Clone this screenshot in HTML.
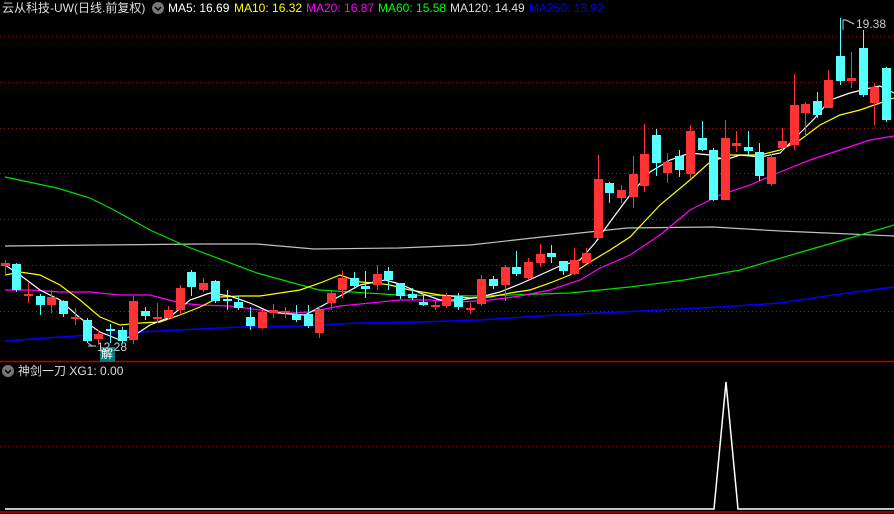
<!DOCTYPE html>
<html><head><meta charset="utf-8"><style>
body{margin:0;background:#000;width:894px;height:514px;overflow:hidden;font-family:"Liberation Sans","Noto Sans CJK SC",sans-serif}
svg{position:absolute;left:0;top:0}
.t{position:absolute;font-size:12px;white-space:nowrap;line-height:14px}
</style></head><body>
<svg width="894" height="514" viewBox="0 0 894 514">
<g stroke="#8b1a1a" stroke-dasharray="1,3" stroke-width="1">
<line x1="0" y1="36.5" x2="894" y2="36.5"/><line x1="0" y1="82.5" x2="894" y2="82.5"/><line x1="0" y1="128.5" x2="894" y2="128.5"/><line x1="0" y1="173.5" x2="894" y2="173.5"/><line x1="0" y1="219.5" x2="894" y2="219.5"/><line x1="0" y1="265.5" x2="894" y2="265.5"/><line x1="0" y1="311.5" x2="894" y2="311.5"/><line x1="0" y1="446.5" x2="894" y2="446.5"/>
</g>
<g fill="none" stroke-width="1.2">
<polyline stroke="#c0c0c0" points="5,246 100,245 200,244 257,244 314,249 399,248 470,245 542,237 627,228 713,227 780,231 827,233 894,236"/>
<polyline stroke="#0000ff" stroke-width="1.6" points="5,341 60,337 120,333 180,330 240,327 300,326 360,323 420,322 480,320 540,316 600,313 660,310 720,307 780,303 840,294 894,287"/>
<polyline stroke="#00e000" points="5,177 57,188 90,198 114,210 150,230 188,247 257,273 319,290 399,295 480,296 570,293 630,287 684,280 740,270 798,253 850,238 894,225"/>
<polyline stroke="#ff00ff" points="5,290 30,290 60,292 90,292 120,295 150,295 180,303 200,305 230,306 260,310 290,313 310,312 340,306 370,303 400,300 430,300 460,302 490,300 520,296 550,290 580,280 600,268 630,255 660,235 690,210 720,195 750,185 780,172 810,160 840,150 870,140 894,136"/>
<polyline stroke="#ffff00" points="5,275 20,272 40,275 60,285 80,300 100,317 120,325 140,323 160,322 180,315 200,307 220,297 240,296 260,296 280,293 300,290 320,283 340,275 360,282 375,283 390,285 410,290 440,295 470,298 490,297 510,293 530,290 550,283 570,275 590,262 610,250 630,237 660,205 690,180 710,162 730,155 760,155 780,150 800,140 820,125 840,115 860,110 880,103 894,98"/>
<polyline stroke="#ffffff" points="5,265 20,275 40,290 60,300 80,318 100,332 120,340 135,335 150,325 170,317 190,300 210,293 230,296 250,303 270,312 290,314 305,315 320,307 340,296 360,285 385,280 400,284 420,293 440,300 460,300 480,297 500,292 520,284 540,275 560,266 580,260 595,243 610,222 630,195 650,172 670,160 690,153 710,155 725,160 740,155 760,157 780,153 800,133 815,118 830,100 850,93 870,88 880,86 894,93"/>
</g>
<g id="c"></g>
<line x1="0" y1="361.5" x2="894" y2="361.5" stroke="#c00000" stroke-width="1.5"/>
<polyline fill="none" stroke="#fff" stroke-width="1.5" points="5,509 714,509 726,382 738,509 894,509"/>
<line x1="0" y1="512" x2="894" y2="512" stroke="#c00000" stroke-width="1.5"/>
<circle cx="158" cy="8" r="6" fill="#777"/><path d="M155 7 l3 3 l3 -3" stroke="#000" fill="none" stroke-width="1.5"/>
<circle cx="8" cy="371" r="6" fill="#777"/><path d="M5 370 l3 3 l3 -3" stroke="#000" fill="none" stroke-width="1.5"/>
<path d="M843 30 V20 h3 M846 20 l8 4" stroke="#ccc" fill="none"/>
<path d="M92 346 l-4 -3 M88 346 h8" stroke="#ccc" fill="none"/>
<rect x="100" y="347" width="15" height="15" fill="#007a7a"/>
</svg>
<div class="t" style="left:2px;top:1px;color:#ddd">云从科技-UW(日线.前复权)</div>
<div class="t" style="left:168px;top:1px;color:#fff">MA5: 16.69</div>
<div class="t" style="left:234px;top:1px;color:#ff0">MA10: 16.32</div>
<div class="t" style="left:306px;top:1px;color:#f0f">MA20: 16.87</div>
<div class="t" style="left:378px;top:1px;color:#0f0">MA60: 15.58</div>
<div class="t" style="left:450px;top:1px;color:#ddd">MA120: 14.49</div>
<div class="t" style="left:529px;top:1px;color:#00f">MA250: 13.92</div>
<div class="t" style="left:18px;top:364px;color:#ddd">神剑一刀 XG1: 0.00</div>
<div class="t" style="left:856px;top:17px;color:#ccc">19.38</div>
<div class="t" style="left:97px;top:340px;color:#ccc">12.28</div>
<div class="t" style="left:101px;top:347px;color:#fff;font-size:12px">解</div>
<script>
var d=[[5,263,266,260,275,1],[16,264,290,263,292,0],[28,294,296,283,303,1],[40,296,305,294,315,0],[51,297,305,290,313,1],[63,301,314,300,317,0],[75,317,319,308,325,1],[87,320,341,318,343,0],[98,334,339,330,344,1],[110,329,331,324,343,0],[122,330,341,327,343,0],[133,301,340,296,344,1],[145,311,316,307,320,0],[157,317,319,303,323,1],[168,310,318,306,320,1],[180,288,310,285,315,1],[191,272,287,270,296,0],[203,283,290,278,292,1],[215,281,301,280,303,0],[227,299,301,290,310,0],[238,302,308,296,310,0],[250,317,326,307,330,0],[262,312,328,310,329,1],[273,310,313,304,318,1],[285,311,313,307,318,1],[296,314,320,305,322,0],[308,314,326,305,328,0],[319,309,333,307,338,1],[331,293,303,290,310,1],[342,278,290,271,298,1],[354,278,286,272,288,0],[365,286,289,271,298,0],[377,274,285,265,290,1],[388,271,280,267,290,0],[400,283,296,283,299,0],[412,294,298,288,300,0],[423,302,305,294,306,0],[435,305,307,301,310,1],[446,296,306,293,308,1],[458,296,307,293,310,0],[470,308,310,303,314,1],[481,279,304,275,306,1],[493,279,286,276,289,0],[505,267,285,265,301,1],[516,267,274,251,276,0],[528,262,278,258,280,1],[540,254,263,244,267,1],[551,253,257,245,263,0],[563,261,271,262,275,0],[574,260,274,248,275,1],[586,253,263,248,264,1],[598,179,238,155,240,1],[609,183,193,182,203,0],[621,190,198,185,203,1],[633,174,197,156,208,1],[644,154,186,124,192,1],[656,135,163,129,176,0],[667,162,173,153,183,1],[679,156,170,150,177,0],[690,131,174,125,178,1],[702,138,150,121,151,0],[713,150,200,148,201,0],[725,138,200,120,200,1],[736,143,146,131,152,1],[748,147,151,131,155,0],[759,152,176,143,181,0],[771,157,184,154,186,1],[782,141,148,128,150,1],[794,105,145,74,150,1],[805,104,113,102,136,1],[817,101,115,92,118,0],[828,80,108,70,108,1],[840,56,81,18,85,0],[851,78,81,52,88,1],[863,48,95,30,97,0],[874,87,103,83,125,1],[886,68,120,67,122,0]];
var s='';d.forEach(function(c){var col=c[5]?'#ff3333':'#54ffff';s+='<line x1="'+(c[0]+.5)+'" y1="'+c[3]+'" x2="'+(c[0]+.5)+'" y2="'+c[4]+'" stroke="'+col+'"/>';s+='<rect x="'+(c[0]-4)+'" y="'+c[1]+'" width="9" height="'+Math.max(1.5,c[2]-c[1])+'" fill="'+col+'"/>';});
document.getElementById('c').innerHTML=s;
</script>
</body></html>
